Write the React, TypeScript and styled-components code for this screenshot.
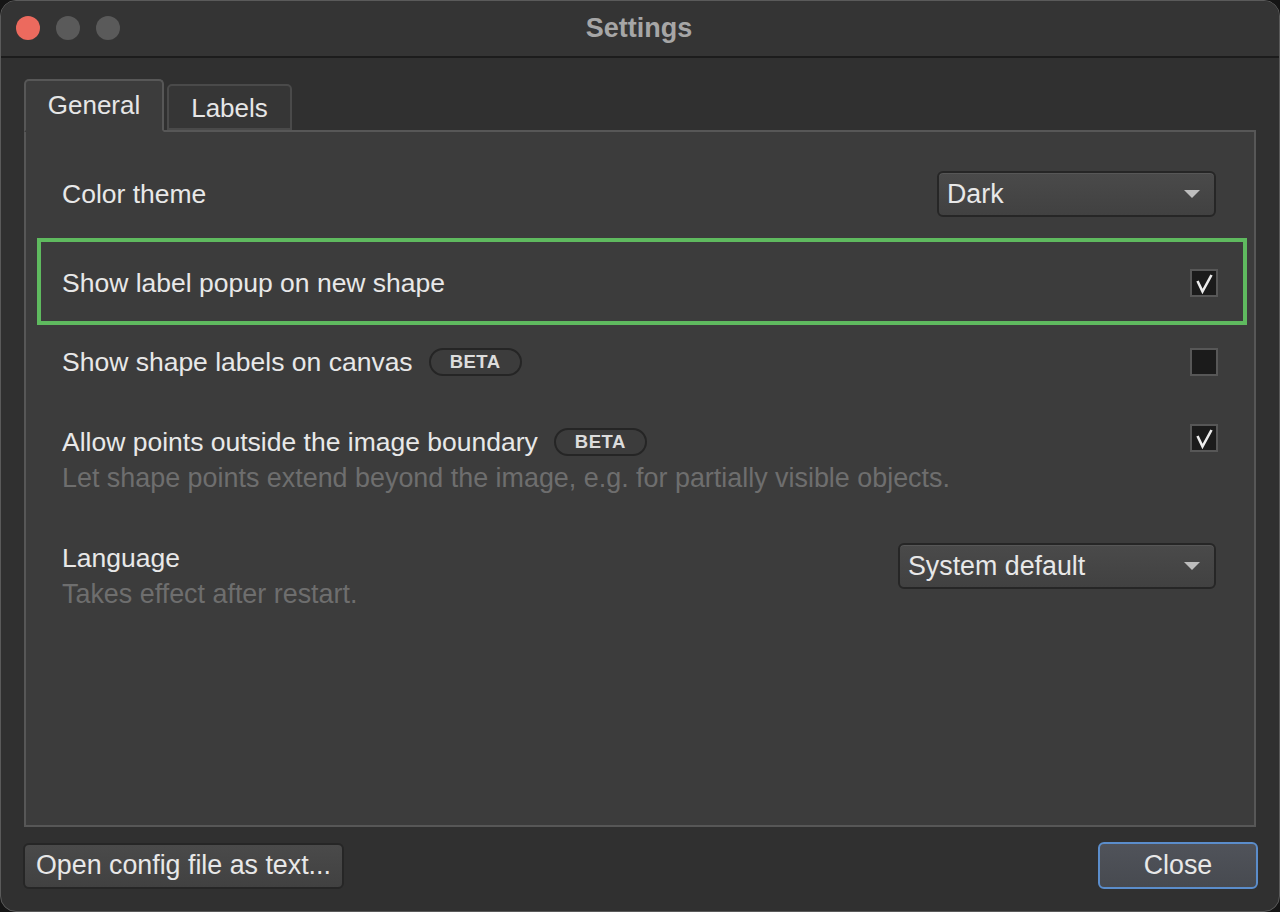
import styled, { createGlobalStyle } from "styled-components";

const GlobalStyle = createGlobalStyle`
  html, body {
    margin: 0;
    padding: 0;
    background: #151515;
  }
  body {
    font-family: "Liberation Sans", Arial, sans-serif;
  }
`;

const Window = styled.div`
  width: 1280px;
  height: 912px;
  box-sizing: border-box;
  display: flex;
  flex-direction: column;
  background: #303030;
  border: 1px solid #5a5a5a;
  border-radius: 16px;
  overflow: hidden;
`;

const TitleBar = styled.div`
  position: relative;
  height: 55px;
  flex: none;
  display: flex;
  align-items: center;
  justify-content: center;
  background: #343434;
  border-bottom: 2px solid #1c1c1c;
`;

const Lights = styled.div`
  position: absolute;
  left: 15px;
  top: 15px;
  display: flex;
  gap: 16px;
`;

const Light = styled.span<{ $color: string }>`
  width: 24px;
  height: 24px;
  border-radius: 50%;
  background: ${(p) => p.$color};
`;

const Title = styled.div`
  font-size: 27px;
  font-weight: 700;
  color: #a6a6a6;
  margin-right: 2px;
`;

const Body = styled.div`
  flex: 1;
  display: flex;
  flex-direction: column;
  padding: 23px 23px 22px 23px;
`;

const TabBar = styled.div`
  display: flex;
  align-items: flex-end;
  gap: 3px;
  height: 51px;
  position: relative;
  z-index: 1;
  margin-bottom: -2px;
`;

const Tab = styled.div<{ $active?: boolean }>`
  box-sizing: border-box;
  display: flex;
  align-items: center;
  justify-content: center;
  font-size: 26px;
  color: #e6e6e6;
  border: 2px solid ${(p) => (p.$active ? "#575757" : "#4a4a4a")};
  border-radius: 5px 5px 0 0;
  background: ${(p) => (p.$active ? "#3c3c3c" : "#363636")};
  width: ${(p) => (p.$active ? "140px" : "125px")};
  height: ${(p) => (p.$active ? "53px" : "46px")};
  ${(p) => (p.$active ? "border-bottom-color: #3c3c3c;" : "margin-bottom: 2px;")}
  padding-top: ${(p) => (p.$active ? "0" : "2px")};
`;

const Pane = styled.div`
  flex: 1;
  box-sizing: border-box;
  display: flex;
  flex-direction: column;
  background: #3c3c3c;
  border: 2px solid #575757;
  padding: 39px 36px 0 36px;
`;

const Row = styled.div<{ $top: number; $align?: string }>`
  position: relative;
  display: flex;
  align-items: ${(p) => p.$align || "center"};
  justify-content: space-between;
  min-height: 46px;
  margin-top: ${(p) => p.$top}px;
`;

const Highlight = styled.div`
  position: absolute;
  left: -25px;
  right: -29px;
  top: -22px;
  bottom: -19px;
  border: 4px solid #5fba5f;
  pointer-events: none;
`;

const TextBlock = styled.div`
  display: flex;
  flex-direction: column;
`;

const Label = styled.div`
  display: flex;
  align-items: center;
  font-size: 26.5px;
  line-height: 36px;
  color: #e8e8e8;
`;

const Desc = styled.div`
  font-size: 26.9px;
  line-height: 37px;
  color: #6e6e6e;
`;

const Beta = styled.span`
  margin-left: 16px;
  box-sizing: border-box;
  height: 28px;
  padding: 0 19px;
  display: inline-flex;
  align-items: center;
  border: 2px solid #252525;
  border-radius: 14px;
  font-size: 18.5px;
  font-weight: 700;
  letter-spacing: 0.5px;
  color: #dcdcdc;
`;

const Combo = styled.div<{ $width: number; $offset?: number }>`
  box-sizing: border-box;
  width: ${(p) => p.$width}px;
  height: 46px;
  margin-right: 2px;
  margin-top: ${(p) => p.$offset || 0}px;
  display: flex;
  align-items: center;
  justify-content: space-between;
  padding: 0 14px 0 8px;
  border: 2px solid #262626;
  border-radius: 6px;
  background: linear-gradient(#4a4a4a, #414141);
  box-shadow: inset 0 1px 0 #575757;
  font-size: 26.8px;
  color: #e8e8e8;
`;

const Arrow = styled.span`
  width: 0;
  height: 0;
  border-left: 8px solid transparent;
  border-right: 8px solid transparent;
  border-top: 8px solid #bdbdbd;
`;

const Box = styled.div`
  box-sizing: border-box;
  width: 28px;
  height: 28px;
  flex: none;
  display: flex;
  align-items: center;
  justify-content: center;
  background: #1b1b1b;
  border: 2px solid #575757;
`;

const Footer = styled.div`
  display: flex;
  justify-content: space-between;
  align-items: center;
  margin-top: 15px;
`;

const Button = styled.div<{ $primary?: boolean }>`
  box-sizing: border-box;
  height: ${(p) => (p.$primary ? "47px" : "46px")};
  display: flex;
  align-items: center;
  justify-content: center;
  padding: 0 11px;
  min-width: ${(p) => (p.$primary ? "160px" : "0")};
  border: 2px solid ${(p) => (p.$primary ? "#5b8dcb" : "#262626")};
  border-radius: 6px;
  background: ${(p) =>
    p.$primary ? "linear-gradient(#50535a, #474a50)" : "linear-gradient(#4a4a4a, #414141)"};
  font-size: 26.8px;
  color: #e8e8e8;
  margin-left: ${(p) => (p.$primary ? "0" : "-1px")};
  margin-right: ${(p) => (p.$primary ? "-2px" : "0")};
`;

const Check = ({ on }: { on?: boolean }) => (
  <Box>
    {on && (
      <svg width="24" height="24" viewBox="0 0 24 24">
        <path d="M5.5 10 L10.5 20.5 L19.5 4" fill="none" stroke="#ececec" strokeWidth="2.6" />
      </svg>
    )}
  </Box>
);

const App = () => (
  <>
    <GlobalStyle />
    <Window>
      <TitleBar>
        <Lights>
          <Light $color="#ec6a5e" />
          <Light $color="#5a5a5a" />
          <Light $color="#5a5a5a" />
        </Lights>
        <Title>Settings</Title>
      </TitleBar>
      <Body>
        <TabBar>
          <Tab $active>General</Tab>
          <Tab>Labels</Tab>
        </TabBar>
        <Pane>
          <Row $top={0}>
            <Label>Color theme</Label>
            <Combo $width={279}>
              Dark
              <Arrow />
            </Combo>
          </Row>
          <Row $top={43}>
            <Highlight />
            <Label>Show label popup on new shape</Label>
            <Check on />
          </Row>
          <Row $top={33}>
            <Label>
              Show shape labels on canvas<Beta>BETA</Beta>
            </Label>
            <Check />
          </Row>
          <Row $top={39} $align="flex-start">
            <TextBlock>
              <Label>
                Allow points outside the image boundary<Beta>BETA</Beta>
              </Label>
              <Desc>Let shape points extend beyond the image, e.g. for partially visible objects.</Desc>
            </TextBlock>
            <Check on />
          </Row>
          <Row $top={43} $align="flex-start">
            <TextBlock>
              <Label>Language</Label>
              <Desc>Takes effect after restart.</Desc>
            </TextBlock>
            <Combo $width={318} $offset={3}>
              System default
              <Arrow />
            </Combo>
          </Row>
        </Pane>
        <Footer>
          <Button>Open config file as text...</Button>
          <Button $primary>Close</Button>
        </Footer>
      </Body>
    </Window>
  </>
);

export default App;
